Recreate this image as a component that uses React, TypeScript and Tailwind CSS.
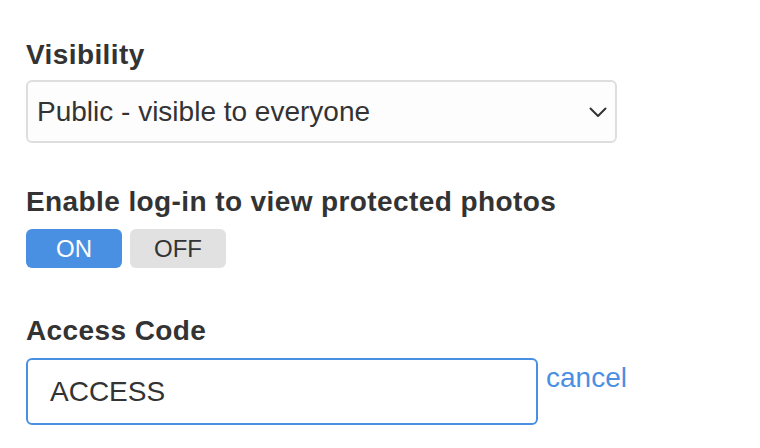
import { useState } from "react";

const labelCls = "block text-[28px] leading-[32px] font-bold tracking-[0.4px] text-[#333]";

export default function App() {
  const [loginOn, setLoginOn] = useState(true);
  const [code, setCode] = useState("ACCESS");

  return (
    <div className="min-h-[448px] w-[760px] bg-white pl-[26px] pt-[39px] font-['Liberation_Sans',Arial,sans-serif] text-[#333]">
      {/* Visibility */}
      <label className={labelCls}>Visibility</label>
      <div className="mt-[9px] flex h-[63px] w-[591px] items-center justify-between rounded-[6px] border-2 border-[#dedede] bg-[#fdfdfd] pl-[9px] pr-[8px]">
        <span className="text-[28px] leading-[32px] text-[#333]">Public - visible to everyone</span>
        <svg width="18" height="11" viewBox="0 0 18 11" fill="none" className="mt-[1px]">
          <polyline points="1.5,1.5 9,9 16.5,1.5" stroke="#333" strokeWidth="2" strokeLinecap="round" strokeLinejoin="round" />
        </svg>
      </div>

      {/* Log-in toggle */}
      <label className={`${labelCls} mt-[43px]`}>Enable log-in to view protected photos</label>
      <div className="mt-[11px] flex gap-[8px]">
        <button
          onClick={() => setLoginOn(true)}
          className={`h-[39px] w-[96px] rounded-[6px] text-[24px] leading-[28px] ${loginOn ? "bg-[#4a90e2] text-white" : "bg-[#e1e1e1] text-[#333]"}`}
        >
          ON
        </button>
        <button
          onClick={() => setLoginOn(false)}
          className={`h-[39px] w-[96px] rounded-[6px] text-[24px] leading-[28px] ${!loginOn ? "bg-[#4a90e2] text-white" : "bg-[#e1e1e1] text-[#333]"}`}
        >
          OFF
        </button>
      </div>

      {/* Access code */}
      <label className={`${labelCls} mt-[47px]`}>Access Code</label>
      <div className="mt-[11px] flex items-start gap-[8px]">
        <input
          value={code}
          onChange={(e) => setCode(e.target.value)}
          className="h-[67px] w-[512px] rounded-[6px] border-2 border-[#4a90e2] bg-white pl-[22px] font-['Liberation_Sans',Arial,sans-serif] text-[28px] text-[#333] outline-none"
        />
        <a href="#" className="mt-[4px] text-[28px] leading-[32px] text-[#4a90e2]">
          cancel
        </a>
      </div>
    </div>
  );
}
